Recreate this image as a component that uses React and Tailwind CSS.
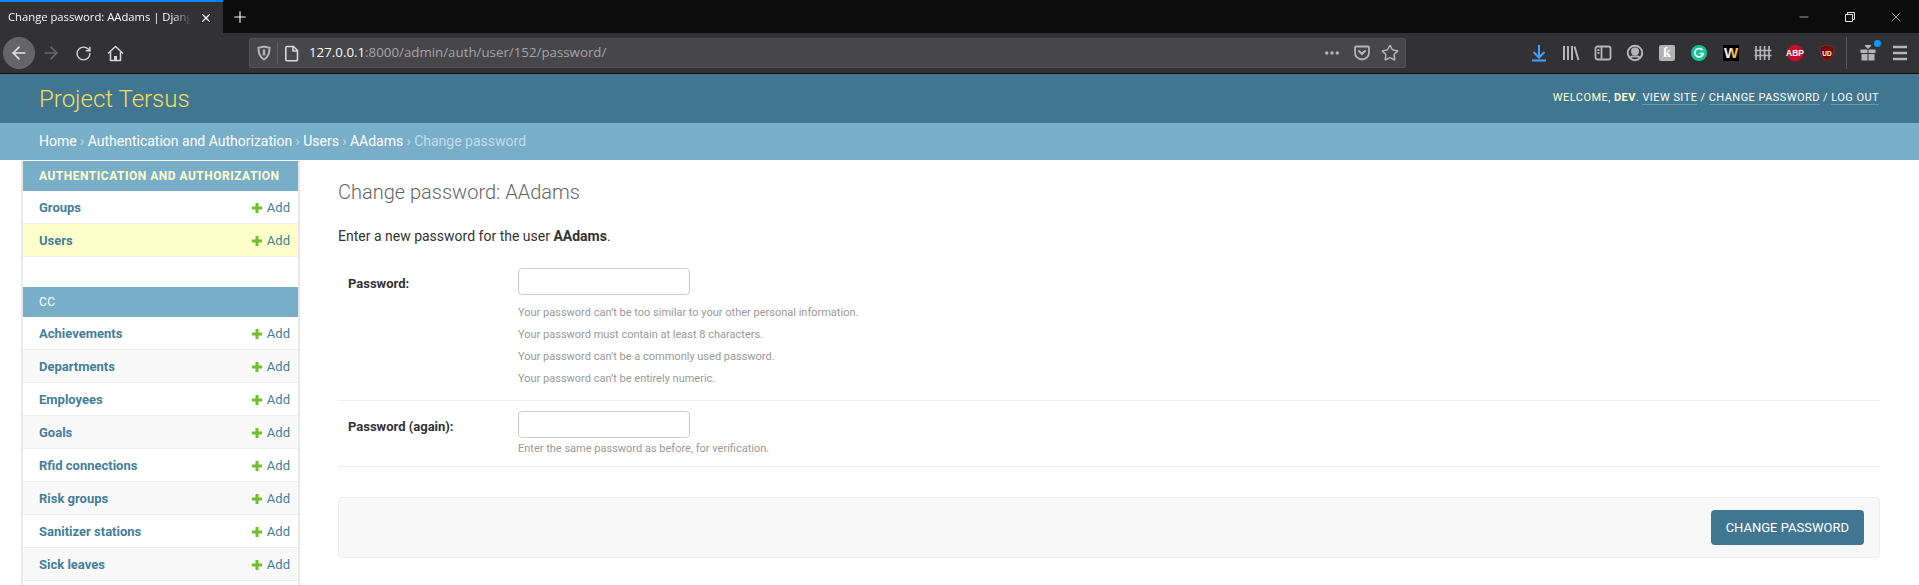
import { Minus, X, Plus, ArrowLeft, ArrowRight, RotateCw, Star, Ellipsis } from 'lucide-react';

const authRows = [
  { name: 'Groups', bg: 'bg-white' },
  { name: 'Users', bg: 'bg-[#ffffcc]' },
];

const ccRows = [
  { name: 'Achievements', bg: 'bg-white' },
  { name: 'Departments', bg: 'bg-[#f9f9f9]' },
  { name: 'Employees', bg: 'bg-white' },
  { name: 'Goals', bg: 'bg-[#f9f9f9]' },
  { name: 'Rfid connections', bg: 'bg-white' },
  { name: 'Risk groups', bg: 'bg-[#f9f9f9]' },
  { name: 'Sanitizer stations', bg: 'bg-white' },
  { name: 'Sick leaves', bg: 'bg-[#f9f9f9]' },
];

const hints = [
  'Your password can’t be too similar to your other personal information.',
  'Your password must contain at least 8 characters.',
  'Your password can’t be a commonly used password.',
  'Your password can’t be entirely numeric.',
];

const SidebarRow = ({ name, bg }) => (
  <div className={`flex h-[33px] items-center justify-between border-b border-[#eeeeee] pl-4 pr-2 pt-px text-[13px] ${bg}`}>
    <a className="font-bold text-[#447e9b]">{name}</a>
    <a className="flex items-center text-[#447e9b]">
      <svg className="mr-[5px] h-[10px] w-[10px]" viewBox="0 0 10 10">
        <path d="M3.5 0h3v3.5H10v3H6.5V10h-3V6.5H0v-3h3.5z" fill="#70bf2b" />
      </svg>
      Add
    </a>
  </div>
);

const Caption = ({ children, className }) => (
  <div className={`flex h-[30px] items-center bg-[#79aec8] pl-4 text-[12px] uppercase tracking-[0.5px] ${className}`}>
    {children}
  </div>
);

const ToolIcon = ({ children }) => (
  <div className="flex h-8 w-8 items-center justify-center">{children}</div>
);

const Crumb = () => <span className="mx-[3.4px] text-[14px]">›</span>;

const BrowserChrome = () => (
  <div className="font-['Open_Sans',sans-serif]">
    {/* Tab strip */}
    <div className="flex h-[33px] items-stretch bg-[#0c0c0c] text-[#f9f9fa]">
      <div className="flex w-[223px] items-center border-t-2 border-[#0a84ff] bg-[#323234] pl-2 pr-[10px]">
        <span className="min-w-0 flex-1 overflow-hidden whitespace-nowrap text-[11.25px] [mask-image:linear-gradient(to_right,black_90%,transparent)]">
          Change password: AAdams | Django site admin
        </span>
        <X className="ml-2 h-[14px] w-[14px]" strokeWidth={2} />
      </div>
      <div className="flex w-[34px] items-center justify-center">
        <Plus className="h-[18px] w-[18px]" strokeWidth={1.5} />
      </div>
      <div className="ml-auto flex items-center text-[#e8e8e8]">
        <div className="flex w-[46px] justify-center">
          <Minus className="h-[14px] w-[14px]" strokeWidth={1.2} />
        </div>
        <div className="flex w-[46px] justify-center">
          <svg className="h-[12px] w-[12px]" viewBox="0 0 12 12" fill="none" stroke="currentColor">
            <path d="M1.5 3.5h7v7h-7zM3.5 3.5v-2h7v7h-2" />
          </svg>
        </div>
        <div className="flex w-[46px] justify-center">
          <X className="h-[16px] w-[16px]" strokeWidth={1} />
        </div>
      </div>
    </div>

    {/* Toolbar */}
    <div className="flex h-[41px] items-center border-b border-[#0c0c0c] bg-[#323234] text-[#d7d7d8]">
      <div className="ml-[3px] flex h-8 w-8 items-center justify-center rounded-full bg-[#656567]">
        <ArrowLeft className="h-[20px] w-[20px] text-[#e4e4e5]" strokeWidth={2} />
      </div>
      <div className="flex h-8 w-8 items-center justify-center">
        <ArrowRight className="h-[20px] w-[20px] text-[#68686a]" strokeWidth={2} />
      </div>
      <div className="flex h-8 w-8 items-center justify-center">
        <RotateCw className="h-[17px] w-[17px]" strokeWidth={2} />
      </div>
      <div className="flex h-8 w-8 items-center justify-center">
        <svg className="h-[17px] w-[17px]" viewBox="0 0 17 17" fill="none" stroke="currentColor" strokeWidth="1.5" strokeLinejoin="round">
          <path d="M1 8.500L8.500 1.500l7.500 7M3.500 7v8.500h10V7" />
          <path d="M7 15.500v-4.500h3v4.500" fill="currentColor" stroke="none" />
        </svg>
      </div>

      {/* URL bar */}
      <div className="ml-[118px] flex h-[30px] w-[1157px] items-center rounded-[2px] border border-[#525254] bg-[#474749]">
        <div className="flex h-full w-[27px] items-center justify-center">
          <svg className="h-[16px] w-[16px]" viewBox="0 0 16 16" fill="none" stroke="#b5b5b7" strokeWidth="2">
            <path d="M8 1.500l5.500 1.200c.2 5.500-1.500 9.500-5.500 11.800C4 12.200 2.300 8.200 2.500 2.700z" />
            <path d="M8 4.500v6" strokeWidth="2.500" />
          </svg>
        </div>
        <div className="h-[22px] w-px bg-[#606062]" />
        <svg className="ml-[6px] h-[17px] w-[16px]" viewBox="0 0 16 17" fill="none" stroke="#d7d7d8" strokeWidth="1.6">
          <path d="M3 1.500h6.500L13.500 5.500v9a1.200 1.200 0 0 1-1.200 1.200H3A1.200 1.200 0 0 1 1.800 14.500V2.700A1.200 1.200 0 0 1 3 1.500zM9 1.500v4.500h4.500" />
        </svg>
        <span className="ml-[9px] whitespace-nowrap text-[13.3px] text-[#f9f9fa]">
          127.0.0.1<span className="text-[#a5a5a7]">:8000/admin/auth/user/152/password/</span>
        </span>
        <div className="ml-auto flex items-center pr-[6px] text-[#b5b5b7]">
          <Ellipsis className="mr-[12px] h-[18px] w-[18px]" strokeWidth={2.5} />
          <svg className="mr-[10px] h-[18px] w-[18px]" viewBox="0 0 18 18" fill="none" stroke="currentColor" strokeWidth="1.8">
            <path d="M3 2.500h12a1 1 0 0 1 1 1v5a7 7 0 0 1-14 0v-5a1 1 0 0 1 1-1z" />
            <path d="M6 7l3 3 3-3" strokeWidth="2" strokeLinecap="round" />
          </svg>
          <Star className="h-[18px] w-[18px]" strokeWidth={2} />
        </div>
      </div>

      {/* Extensions */}
      <div className="ml-[117px] flex items-center">
        <ToolIcon>
          <svg className="h-[18px] w-[18px]" viewBox="0 0 18 18" fill="none" stroke="#45a1ff" strokeWidth="2">
            <path d="M9 1v12M3.500 8l5.500 5.500L14.500 8M2 16.500h14" />
          </svg>
        </ToolIcon>
        <ToolIcon>
          <svg className="h-[18px] w-[18px]" viewBox="0 0 18 18" fill="none" stroke="#b5b5b7" strokeWidth="2">
            <path d="M2 2v14M6 2v14M10 2v14M12.500 2.500L16.500 16" />
          </svg>
        </ToolIcon>
        <ToolIcon>
          <svg className="h-[18px] w-[18px]" viewBox="0 0 18 18" fill="none" stroke="#b5b5b7" strokeWidth="1.8">
            <rect x="1.500" y="2.500" width="15" height="13" rx="2" />
            <path d="M7.500 2.500v13M3.500 6h2M3.500 9h2" />
          </svg>
        </ToolIcon>
        <ToolIcon>
          <svg className="h-[18px] w-[18px]" viewBox="0 0 18 18" fill="none" stroke="#b5b5b7" strokeWidth="2">
            <circle cx="9" cy="9" r="7.200" />
            <circle cx="9" cy="7.500" r="3" fill="#b5b5b7" />
            <path d="M4 14c1.500-2.500 8.500-2.500 10 0" />
          </svg>
        </ToolIcon>
        <ToolIcon>
          <div className="flex h-4 w-4 items-center justify-center rounded-[2px] bg-[#b3b3b3] font-['Liberation_Serif',serif] text-[14px] font-bold leading-none text-white">
            ƙ
          </div>
        </ToolIcon>
        <ToolIcon>
          <svg className="h-4 w-4" viewBox="0 0 16 16">
            <circle cx="8" cy="8" r="8" fill="#15c39a" />
            <path d="M11.500 5.200A4.200 4.200 0 1 0 12.200 8.500H8.500" fill="none" stroke="#ffffff" strokeWidth="1.600" />
          </svg>
        </ToolIcon>
        <ToolIcon>
          <svg className="h-4 w-4" viewBox="0 0 16 16">
            <defs>
              <linearGradient id="wmark" x1="0" x2="1" y1="0" y2="0">
                <stop offset="0.45" stopColor="#f2f2f2" />
                <stop offset="0.55" stopColor="#f0c43a" />
              </linearGradient>
            </defs>
            <rect width="16" height="16" fill="#000000" />
            <text x="8" y="13" textAnchor="middle" fontSize="15" fontWeight="700" fontFamily="Liberation Sans, sans-serif" fill="url(#wmark)">W</text>
          </svg>
        </ToolIcon>
        <ToolIcon>
          <svg className="h-[18px] w-[18px]" viewBox="0 0 18 18" fill="none" stroke="#b5b5b7" strokeWidth="1.700">
            <path d="M2 2v14M6.300 2v14M10.600 2v14M15 2v14M0.500 6.500h17M0.500 11.500h17" />
          </svg>
        </ToolIcon>
        <ToolIcon>
          <svg className="h-[18px] w-[18px]" viewBox="0 0 18 18">
            <path d="M5.500 1h7L17 5.500v7L12.500 17h-7L1 12.500v-7z" fill="#c70d2c" />
            <text x="9" y="12" textAnchor="middle" fontSize="8.500" fontWeight="700" fontFamily="Liberation Sans, sans-serif" fill="#ffffff">ABP</text>
          </svg>
        </ToolIcon>
        <ToolIcon>
          <svg className="h-[18px] w-[18px]" viewBox="0 0 18 18">
            <path d="M9 1l7 2c.2 7-2 11.500-7 14C4 14.500 1.800 10 2 3z" fill="#800000" stroke="#4a4a4a" strokeWidth="0.800" />
            <text x="9" y="11.500" textAnchor="middle" fontSize="6.500" fontWeight="700" fontFamily="Liberation Sans, sans-serif" fill="#ffffff">UD</text>
          </svg>
        </ToolIcon>
        <div className="ml-[3px] h-[32px] w-px bg-[#58585a]" />
        <div className="relative ml-[5px]">
          <ToolIcon>
            <svg className="h-[18px] w-[18px]" viewBox="0 0 18 18" fill="#b5b5b7">
              <path d="M1.500 5.500h7v3.500h-7zM9.500 5.500h7v3.500h-7zM2.500 10h6v6.500h-6zM9.500 10h6v6.500h-6zM6 2l3 3 3-3v-1H6z" />
            </svg>
          </ToolIcon>
          <span className="absolute right-[3px] top-[3px] h-[7px] w-[7px] rounded-full bg-[#0a9dff]" />
        </div>
        <ToolIcon>
          <svg className="h-[18px] w-[18px]" viewBox="0 0 18 18" fill="none" stroke="#b5b5b7" strokeWidth="2.500">
            <path d="M2 3h14M2 9h14M2 15h14" />
          </svg>
        </ToolIcon>
      </div>
    </div>
  </div>
);

const App = () => {
  return (
    <div className="h-[585px] overflow-hidden bg-white font-['Roboto',sans-serif] text-[14px] text-[#333333]">
      <BrowserChrome />

      {/* Header */}
      <div className="flex h-[49px] items-center justify-between bg-[#417690] pl-[39px] pr-[40px]">
        <div className="text-[24px] font-light text-[#f5dd5d]">Project Tersus</div>
        <div className="text-[11px] uppercase tracking-[0.45px] text-[#ffffcc]">
          Welcome, <strong className="font-bold">dev</strong>.{' '}
          <a className="border-b border-[#ffffff40] text-white">View site</a> /{' '}
          <a className="border-b border-[#ffffff40] text-white">Change password</a> /{' '}
          <a className="border-b border-[#ffffff40] text-white">Log out</a>
        </div>
      </div>

      {/* Breadcrumbs */}
      <div className="flex h-[37px] items-center bg-[#79aec8] pl-[39px] text-[14px] text-[#c4dce8]">
        <a className="text-white">Home</a>
        <Crumb />
        <a className="text-white">Authentication and Authorization</a>
        <Crumb />
        <a className="text-white">Users</a>
        <Crumb />
        <a className="text-white">AAdams</a>
        <Crumb />
        <span>Change password</span>
      </div>

      <div className="flex">
        {/* Sidebar */}
        <div className="mt-px ml-[21px] h-[500px] w-[279px] shrink-0 border-x-2 border-[#e8e8e8]">
          <Caption className="font-bold text-[#ffffcc]">Authentication and Authorization</Caption>
          {authRows.map((row) => (
            <SidebarRow key={row.name} {...row} />
          ))}
          <div className="h-[30px]" />
          <Caption className="font-normal text-white">cc</Caption>
          {ccRows.map((row) => (
            <SidebarRow key={row.name} {...row} />
          ))}
        </div>

        {/* Content */}
        <div className="min-w-0 flex-1 pl-[38px] pr-[39px]">
          <h1 className="mt-[20px] text-[20px] font-light leading-[24px] text-[#666666]">Change password: AAdams</h1>
          <p className="mt-[22px] text-[14px] leading-[20px]">
            Enter a new password for the user <strong className="font-bold">AAdams</strong>.
          </p>

          <div className="mt-[19px] flex border-b border-[#eeeeee] pb-[14px] pl-[10px] pt-[3px]">
            <label className="w-[170px] pt-[8px] text-[13px] font-bold leading-[16px]">Password:</label>
            <div>
              <input type="password" className="block h-[27px] w-[172px] rounded-[4px] border border-[#cccccc] bg-white" />
              <div className="mt-[11px] text-[11px] leading-[14px] text-[#999999]">
                {hints.map((hint) => (
                  <p key={hint} className="mt-[8px] first:mt-[2px]">{hint}</p>
                ))}
              </div>
            </div>
          </div>

          <div className="flex border-b border-[#eeeeee] pb-[10px] pl-[10px] pt-[10px]">
            <label className="w-[170px] pt-[8px] text-[13px] font-bold leading-[16px]">Password (again):</label>
            <div>
              <input type="password" className="block h-[27px] w-[172px] rounded-[4px] border border-[#cccccc] bg-white" />
              <p className="mt-[4px] text-[11px] leading-[14px] text-[#999999]">Enter the same password as before, for verification.</p>
            </div>
          </div>

          {/* Submit row */}
          <div className="mt-[30px] flex justify-end rounded-[4px] border border-[#eeeeee] bg-[#f8f8f8] px-[15px] py-[12px]">
            <button className="h-[35px] rounded-[4px] bg-[#417690] px-[15px] text-[13px] font-normal uppercase text-white">
              Change password
            </button>
          </div>
        </div>
      </div>
    </div>
  );
};

export default App;
